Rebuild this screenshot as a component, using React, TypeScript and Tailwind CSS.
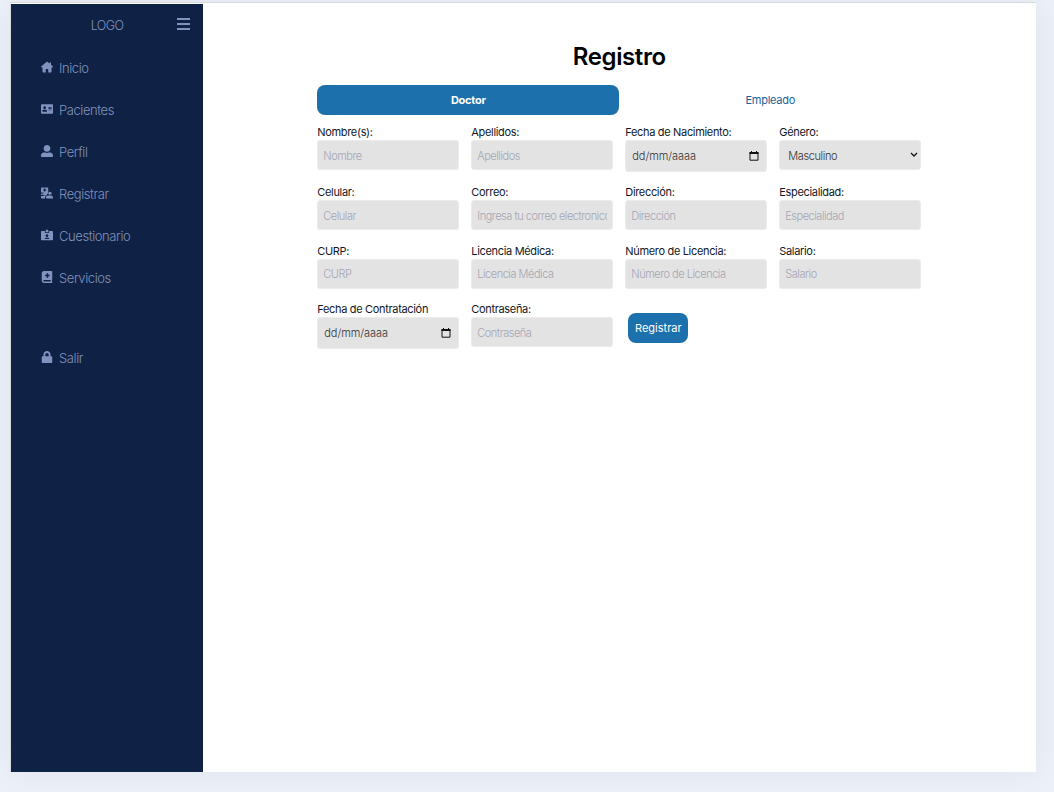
import type { ComponentType, ReactNode } from "react";
import { FaAddressCard, FaBookMedical, FaIdCardAlt, FaLock, FaUserAlt } from "react-icons/fa";

type IconProps = { className?: string };

function HouseIcon({ className }: IconProps) {
  return (
    <svg className={className} viewBox="0 0 24 24" fill="currentColor">
      <path d="M12 .8 .3 11c-.7.7-.2 2 .7 2h2v8.500c0 .9.7 1.500 1.500 1.500h5v-6c0-.6.4-1 1-1h3c.6 0 1 .4 1 1v6h5c.8 0 1.500-.6 1.500-1.500V13h2c.9 0 1.400-1.300.7-2L20 7.500V3h-3v2.200z" />
    </svg>
  );
}

function RegisterIcon({ className }: IconProps) {
  return (
    <svg className={className} viewBox="0 0 24 24" fill="currentColor">
      <path
        fillRule="evenodd"
        d="M2 1h10.500a2 2 0 0 1 2 2v8.500l-3 4V17H5v-1.500H0V13h5v-2H0V3a2 2 0 0 1 2-2zm4.200 2v2H4v2.200h2.200v2h2.300v-2h2.200V5H8.500V3z"
      />
      <path d="M0 18h9.500a6 6 0 0 0-1.500 5H2a2 2 0 0 1-2-2z" />
      <circle cx="18" cy="12.500" r="3.200" />
      <path d="M12 23a2 2 0 0 1-2-2c0-2.600 2-4 4.500-4h5c2.500 0 4.500 1.400 4.500 4v2z" />
    </svg>
  );
}

const links: { label: string; icon: ComponentType<IconProps> }[] = [
  { label: "Inicio", icon: HouseIcon },
  { label: "Pacientes", icon: FaAddressCard },
  { label: "Perfil", icon: FaUserAlt },
  { label: "Registrar", icon: RegisterIcon },
  { label: "Cuestionario", icon: FaIdCardAlt },
  { label: "Servicios", icon: FaBookMedical },
];

const box =
  "block w-full rounded-[3px] border border-[#ebebeb] bg-[#e3e3e3] text-[11px] font-light outline-none";

function NavItem({ label, icon: Icon }: { label: string; icon: ComponentType<IconProps> }) {
  return (
    <a href="#" className="flex h-[42px] items-center gap-[6px] pl-[30px]">
      <Icon className="size-3" />
      <span className="pt-[3px]">{label}</span>
    </a>
  );
}

function Field({ label, children }: { label: string; children: ReactNode }) {
  return (
    <label className="block">
      <span className="block h-4 text-[11px] leading-4 tracking-[-0.33px] whitespace-nowrap text-[#111827]">
        {label}
      </span>
      {children}
    </label>
  );
}

function TextField({ label, hint }: { label: string; hint: string }) {
  return (
    <Field label={label}>
      <input
        className={`${box} h-[30.2px] px-[5px] pt-[1.5px] tracking-[-0.48px] placeholder:text-[#a5a5b5] placeholder:opacity-100`}
        placeholder={hint}
      />
    </Field>
  );
}

function DateField({ label }: { label: string }) {
  return (
    <Field label={label}>
      <span className={`${box} h-[31.5px]`}>
        <span className="flex h-full items-center justify-between pr-[7px] pl-[6px] text-[#333]">
          <span className="pt-px tracking-[-0.05px]">dd/mm/aaaa</span>
          <svg className="size-[10px]" viewBox="0 0 10 10" fill="none">
            <path d="M1 1.5h8v7.7H1z" stroke="#111" />
            <path d="M.5 1h9v2h-9zM2 0h1v1H2zM7 0h1v1H7z" fill="#111" />
          </svg>
        </span>
      </span>
    </Field>
  );
}

export default function App() {
  return (
    <div className="h-[792px] overflow-hidden bg-[#ebf0f9] pt-[2px] pl-[10px] font-['Inter',sans-serif]">
      <div className="flex h-[770px] w-[1026px] border-t border-l border-[#d6d9de] bg-white pt-px shadow-[0_0_30px_rgba(0,0,0,0.06)]">
        <aside className="w-48 bg-[#0f2144] text-[13px] font-light tracking-[-0.42px] text-[#8093bf]">
          <div className="grid h-[42px] grid-cols-[1fr_64px_1fr] items-center pr-[13px] pl-[13px]">
            <span className="col-start-2 pt-[3px] text-center text-[12.5px] tracking-[-0.6px]">LOGO</span>
            <svg className="mb-[3px] h-3 w-[13px] justify-self-end" viewBox="0 0 13 12" fill="currentColor">
              <path d="M0 0h13v2H0zM0 5h13v2H0zM0 10h13v2H0z" />
            </svg>
          </div>
          <nav>
            {links.map((l) => (
              <NavItem key={l.label} {...l} />
            ))}
            <div className="mt-[38px]">
              <NavItem label="Salir" icon={FaLock} />
            </div>
          </nav>
        </aside>
        <main className="flex flex-1 flex-col items-center pt-[36px] pr-[0.4px]">
          <h1 className="h-[45px] text-2xl leading-[34px] font-semibold tracking-[-0.4px] text-black">Registro</h1>
          <div className="w-[604px]">
            <div className="grid h-[30px] grid-cols-2 text-[11px] tracking-[-0.25px]">
              <button className="rounded-lg bg-[#1c70ac] font-bold text-white">Doctor</button>
              <button className="text-[#1c6299]">Empleado</button>
            </div>
            <form className="mt-[9.3px] grid auto-rows-min grid-cols-4 gap-x-3 gap-y-[12.3px]">
              <TextField label="Nombre(s):" hint="Nombre" />
              <TextField label="Apellidos:" hint="Apellidos" />
              <DateField label="Fecha de Nacimiento:" />
              <Field label="Género:">
                <span className={`${box} h-[30.2px]`}>
                  <span className="flex h-full items-center justify-between pr-[2px] pl-2 tracking-[-0.4px] text-[#333]">
                    <span className="pt-[2px]">Masculino</span>
                    <svg className="h-[6px] w-2" viewBox="0 0 8 6" fill="none">
                      <path d="M1 1l3 3 3-3" stroke="#111" strokeWidth="1.3" />
                    </svg>
                  </span>
                </span>
              </Field>
              <TextField label="Celular:" hint="Celular" />
              <TextField label="Correo:" hint="Ingresa tu correo electronico" />
              <TextField label="Dirección:" hint="Dirección" />
              <TextField label="Especialidad:" hint="Especialidad" />
              <TextField label="CURP:" hint="CURP" />
              <TextField label="Licencia Médica:" hint="Licencia Médica" />
              <TextField label="Número de Licencia:" hint="Número de Licencia" />
              <TextField label="Salario:" hint="Salario" />
              <DateField label="Fecha de Contratación" />
              <TextField label="Contraseña:" hint="Contraseña" />
              <div className="pt-3 pl-[3px]">
                <button type="button" className="h-[30px] w-[60px] rounded-lg bg-[#1c70ac] text-[11px] text-white">
                  Registrar
                </button>
              </div>
            </form>
          </div>
        </main>
      </div>
    </div>
  );
}
